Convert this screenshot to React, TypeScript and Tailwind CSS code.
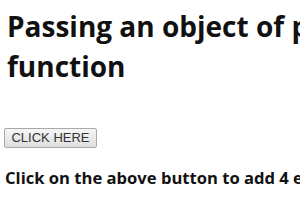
export default function App() {
  return (
    <div className="w-[300px] h-[210px] overflow-hidden bg-white text-[#111] font-['Open_Sans',sans-serif]">
      <h1 className="pl-[7px] pt-[6px] text-[28px] leading-[40px] font-bold whitespace-nowrap">
        Passing an object of parameters to a
        <br />
        function
      </h1>
      <div className="pl-[4px] mt-[38px]">
        <button className="h-[20px] w-[93px] border border-[#a9a9a9] rounded-[2px] bg-gradient-to-b from-[#f6f6f6] to-[#dedede] text-[13px] leading-none text-[#333] font-['Liberation_Sans',Arial,sans-serif]">
          CLICK HERE
        </button>
      </div>
      <p className="pl-[5px] mt-[18px] text-[16.6px] leading-[24px] font-bold whitespace-nowrap">
        Click on the above button to add 4 elements
      </p>
    </div>
  );
}
